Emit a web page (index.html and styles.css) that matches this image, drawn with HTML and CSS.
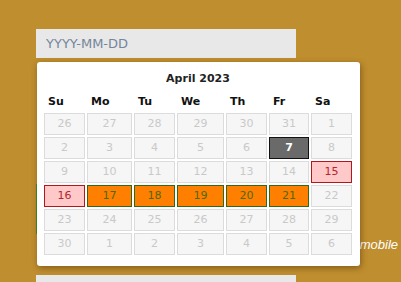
FILE: index.html
```html
<!DOCTYPE html>
<html>
<head>
<meta charset="utf-8">
<link rel="stylesheet" href="styles.css">
</head>
<body>
<div class="form">
  <input class="field" type="text" placeholder="YYYY-MM-DD">
  <div class="green-btn"></div>
  <div class="label">mobile</div>
  <input class="field last" type="text">
</div>

<div class="datepicker">
  <div class="title">April 2023</div>
  <table class="cal">
    <colgroup>
      <col class="c41"><col class="c45"><col class="c41"><col class="c47"><col class="c41"><col class="c40"><col class="c41">
    </colgroup>
    <thead>
      <tr><th>Su</th><th>Mo</th><th>Tu</th><th>We</th><th>Th</th><th>Fr</th><th>Sa</th></tr>
    </thead>
    <tbody>
      <tr><td><span class="d">26</span></td><td><span class="d">27</span></td><td><span class="d">28</span></td><td><span class="d">29</span></td><td><span class="d">30</span></td><td><span class="d">31</span></td><td><span class="d">1</span></td></tr>
      <tr><td><span class="d">2</span></td><td><span class="d">3</span></td><td><span class="d">4</span></td><td><span class="d">5</span></td><td><span class="d">6</span></td><td><span class="d today">7</span></td><td><span class="d">8</span></td></tr>
      <tr><td><span class="d">9</span></td><td><span class="d">10</span></td><td><span class="d">11</span></td><td><span class="d">12</span></td><td><span class="d">13</span></td><td><span class="d">14</span></td><td><span class="d pink">15</span></td></tr>
      <tr><td><span class="d pink">16</span></td><td><span class="d orange">17</span></td><td><span class="d orange">18</span></td><td><span class="d orange">19</span></td><td><span class="d orange">20</span></td><td><span class="d orange">21</span></td><td><span class="d">22</span></td></tr>
      <tr><td><span class="d">23</span></td><td><span class="d">24</span></td><td><span class="d">25</span></td><td><span class="d">26</span></td><td><span class="d">27</span></td><td><span class="d">28</span></td><td><span class="d">29</span></td></tr>
      <tr><td><span class="d">30</span></td><td><span class="d">1</span></td><td><span class="d">2</span></td><td><span class="d">3</span></td><td><span class="d">4</span></td><td><span class="d">5</span></td><td><span class="d">6</span></td></tr>
    </tbody>
  </table>
</div>
</body>
</html>
```

FILE: styles.css
```css
html, body {
  margin: 0;
  padding: 0;
  background: #bf8e2e;
  height: 100%;
  overflow: hidden;
}

.form {
  display: flex;
  flex-direction: column;
  align-items: flex-start;
  padding: 29px 0 0 36px;
}

.field {
  width: 260px;
  height: 29px;
  box-sizing: border-box;
  border: none;
  margin: 0;
  padding: 0 10px;
  background: #e8e8e8;
  font-family: "DejaVu Sans", Verdana, sans-serif;
  font-size: 13px;
  color: #333;
  outline: none;
}

.field::placeholder {
  color: #74869b;
}

.green-btn {
  margin-top: 126px;
  width: 120px;
  height: 50px;
  background: #3f8f22;
}

.label {
  margin-top: 3px;
  width: 362px;
  text-align: right;
  font-family: "Liberation Sans", Arial, sans-serif;
  font-style: italic;
  font-size: 13px;
  line-height: 15px;
  color: #ffffff;
}

.field.last {
  margin-top: 23px;
  height: 7px;
}

.datepicker {
  position: absolute;
  left: 37px;
  top: 62px;
  width: 323px;
  box-sizing: border-box;
  padding: 3px 6px 9px 5px;
  background: #ffffff;
  border-radius: 3px;
  box-shadow: 1px 2px 6px rgba(60, 30, 0, 0.45);
  font-family: "DejaVu Sans", Verdana, sans-serif;
}

.title {
  padding: 4px 0;
  line-height: 20px;
  font-size: 11px;
  font-weight: bold;
  text-align: center;
  color: #222;
}

.cal {
  table-layout: fixed;
  border-collapse: separate;
  border-spacing: 2px;
  width: 312px;
}

.c40 { width: 40px; }
.c41 { width: 41px; }
.c45 { width: 45px; }
.c47 { width: 47px; }

.cal th {
  padding: 0 0 3px 4px;
  text-align: left;
  font-size: 11px;
  font-weight: bold;
  line-height: 13px;
  color: #111;
}

.cal td {
  padding: 0;
}

.d {
  display: block;
  height: 20px;
  line-height: 20px;
  border: 1px solid #dcdcdc;
  background: #f6f6f6;
  color: #c9c9c9;
  font-size: 11px;
  text-align: center;
}

.d.today {
  background: #6a6a6a;
  border-color: #111;
  color: #fff;
  font-weight: bold;
}

.d.pink {
  background: #ffc9c9;
  border-color: #b3161b;
  color: #b3262b;
}

.d.orange {
  background: #ff8000;
  border-color: #2c6a1c;
  color: #4c6a12;
}
```
